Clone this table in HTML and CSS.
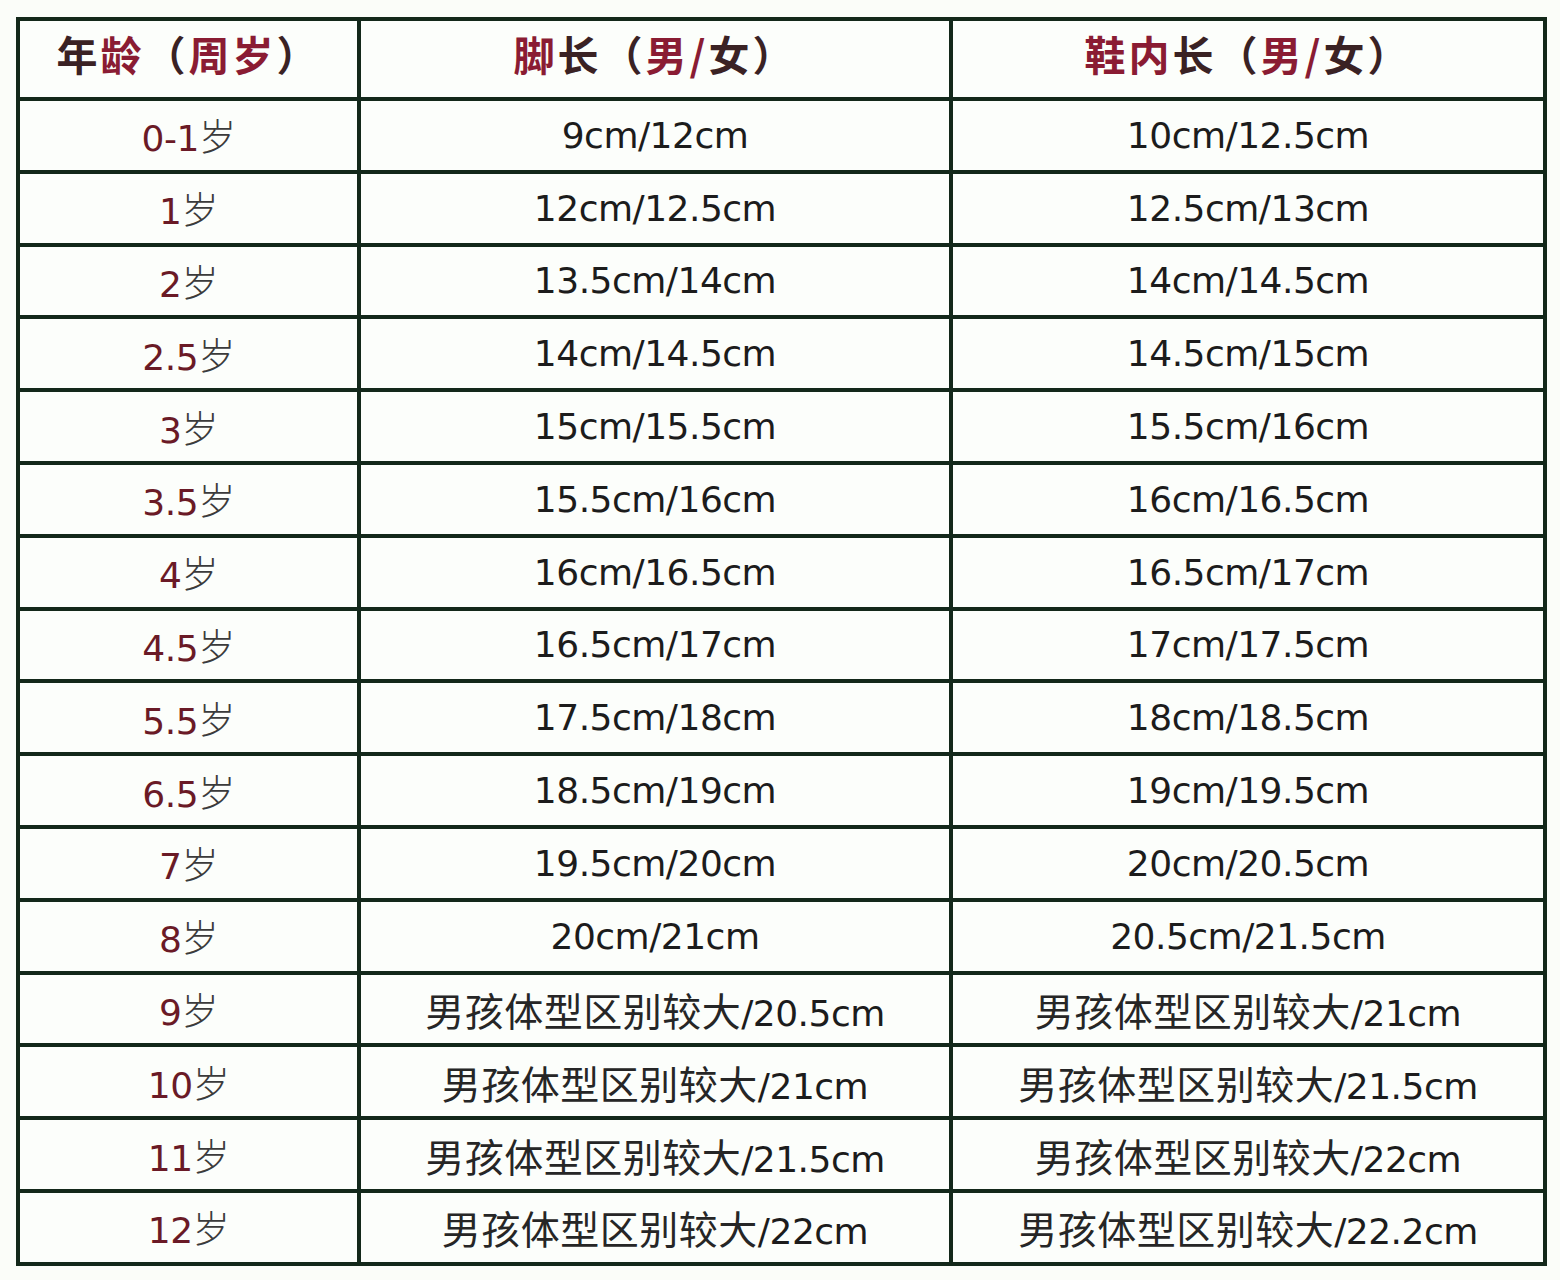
FILE: index.html
```html
<!DOCTYPE html>
<html lang="zh-CN">
<head>
<meta charset="utf-8">
<title>儿童鞋码对照表</title>
<link rel="stylesheet" href="styles.css">
</head>
<body>
<table class="size-table">
  <colgroup>
    <col class="c-age">
    <col class="c-foot">
    <col class="c-shoe">
  </colgroup>
  <thead>
    <tr class="head">
      <th><span class="dk">年</span>龄<span class="dk">（</span>周岁<span class="dk">）</span></th>
      <th>脚<span class="dk">长（</span>男/<span class="dk">女）</span></th>
      <th>鞋内<span class="dk">长（</span>男/<span class="dk">女）</span></th>
    </tr>
  </thead>
  <tbody>
    <tr><td class="age"><span class="num">0-1</span><span class="sui">岁</span></td><td>9cm/12cm</td><td>10cm/12.5cm</td></tr>
    <tr><td class="age"><span class="num">1</span><span class="sui">岁</span></td><td>12cm/12.5cm</td><td>12.5cm/13cm</td></tr>
    <tr><td class="age"><span class="num">2</span><span class="sui">岁</span></td><td>13.5cm/14cm</td><td>14cm/14.5cm</td></tr>
    <tr><td class="age"><span class="num">2.5</span><span class="sui">岁</span></td><td>14cm/14.5cm</td><td>14.5cm/15cm</td></tr>
    <tr><td class="age"><span class="num">3</span><span class="sui">岁</span></td><td>15cm/15.5cm</td><td>15.5cm/16cm</td></tr>
    <tr><td class="age"><span class="num">3.5</span><span class="sui">岁</span></td><td>15.5cm/16cm</td><td>16cm/16.5cm</td></tr>
    <tr><td class="age"><span class="num">4</span><span class="sui">岁</span></td><td>16cm/16.5cm</td><td>16.5cm/17cm</td></tr>
    <tr><td class="age"><span class="num">4.5</span><span class="sui">岁</span></td><td>16.5cm/17cm</td><td>17cm/17.5cm</td></tr>
    <tr><td class="age"><span class="num">5.5</span><span class="sui">岁</span></td><td>17.5cm/18cm</td><td>18cm/18.5cm</td></tr>
    <tr><td class="age"><span class="num">6.5</span><span class="sui">岁</span></td><td>18.5cm/19cm</td><td>19cm/19.5cm</td></tr>
    <tr><td class="age"><span class="num">7</span><span class="sui">岁</span></td><td>19.5cm/20cm</td><td>20cm/20.5cm</td></tr>
    <tr><td class="age"><span class="num">8</span><span class="sui">岁</span></td><td>20cm/21cm</td><td>20.5cm/21.5cm</td></tr>
    <tr><td class="age"><span class="num">9</span><span class="sui">岁</span></td><td><span class="cn">男孩体型区别较大</span>/20.5cm</td><td><span class="cn">男孩体型区别较大</span>/21cm</td></tr>
    <tr><td class="age"><span class="num">10</span><span class="sui">岁</span></td><td><span class="cn">男孩体型区别较大</span>/21cm</td><td><span class="cn">男孩体型区别较大</span>/21.5cm</td></tr>
    <tr><td class="age"><span class="num">11</span><span class="sui">岁</span></td><td><span class="cn">男孩体型区别较大</span>/21.5cm</td><td><span class="cn">男孩体型区别较大</span>/22cm</td></tr>
    <tr><td class="age"><span class="num">12</span><span class="sui">岁</span></td><td><span class="cn">男孩体型区别较大</span>/22cm</td><td><span class="cn">男孩体型区别较大</span>/22.2cm</td></tr>
  </tbody>
</table>
</body>
</html>
```

FILE: styles.css
```css
html, body {
  margin: 0;
  padding: 0;
  background: #fbfdf9;
}
body {
  padding: 17px 0 0 16px;
  font-family: "DejaVu Sans", "Noto Sans CJK SC", sans-serif;
  color: #1c1c1c;
}
.size-table {
  border-collapse: collapse;
  table-layout: fixed;
  width: 1527px;
  background: #fcfefb;
}
.c-age { width: 341px; }
.c-foot { width: 592px; }
.c-shoe { width: 594px; }
.size-table th,
.size-table td {
  border: 4px solid #13281a;
  padding: 0;
  text-align: center;
  vertical-align: middle;
  white-space: nowrap;
}
.head { height: 80px; }
.head th {
  font-family: "Noto Sans CJK SC", sans-serif;
  font-weight: 600;
  font-size: 41px;
  color: #8a1c33;
  letter-spacing: 3px;
  padding-bottom: 12px;
}
.head .dk { color: #3a2224; }
tbody tr { height: 72.8px; }
tbody td {
  font-size: 36px;
  letter-spacing: -0.5px;
}
.cn {
  font-family: "Noto Sans CJK SC", sans-serif;
  font-size: 39px;
  letter-spacing: 0.5px;
  color: #262626;
}
.age .num { color: #6a1a26; }
.age .sui {
  font-family: "Noto Sans CJK SC", sans-serif;
  color: #3b3b3b;
  font-weight: 300;
  font-size: 37px;
}
```
